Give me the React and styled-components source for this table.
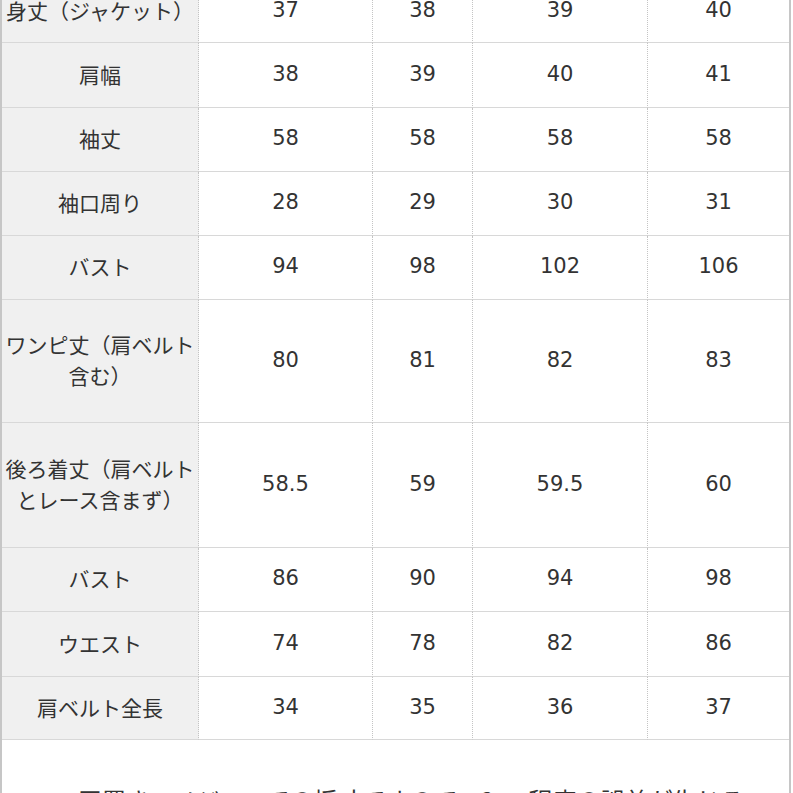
import React from 'react';
import styled, { createGlobalStyle } from 'styled-components';

const GlobalStyle = createGlobalStyle`
  html, body {
    margin: 0;
    padding: 0;
    background: #ffffff;
  }
  body {
    width: 793px;
    height: 793px;
    overflow: hidden;
  }
`;

const Frame = styled.div`
  width: 791px;
  box-sizing: border-box;
  border-left: 2px solid #c6c6c6;
  border-right: 2px solid #c6c6c6;
  min-height: 900px;
  margin-top: -20px;
  font-family: "DejaVu Sans", "Noto Sans CJK JP", sans-serif;
  color: #333333;
`;

const Table = styled.div`
  display: grid;
  grid-template-columns: 197px 174px 100px 175px 1fr;
`;

const Cell = styled.div`
  height: ${p => p.$h}px;
  box-sizing: border-box;
  display: flex;
  align-items: center;
  justify-content: center;
  text-align: center;
  border-bottom: 1px solid #d8d8d8;
  border-right: ${p => (p.$last ? 'none' : '1px dotted #c4c4c4')};
  background: ${p => (p.$label ? '#f0f0f0' : '#ffffff')};
  font-size: 21px;
  font-family: ${p => (p.$label ? '"Noto Sans CJK JP", sans-serif' : '"DejaVu Sans", "Noto Sans CJK JP", sans-serif')};
  line-height: 31px;
  padding: 0 3px 2px;
  white-space: nowrap;
`;

const Note = styled.p`
  margin: 0;
  padding: 43px 0 0 76px;
  font-family: "Noto Sans CJK JP", sans-serif;
  font-size: 24px;
  line-height: 34px;
  color: #333333;
  white-space: nowrap;
`;

const rows = [
  { label: ['身丈（ジャケット）'], values: ['37', '38', '39', '40'], h: 63 },
  { label: ['肩幅'], values: ['38', '39', '40', '41'], h: 65 },
  { label: ['袖丈'], values: ['58', '58', '58', '58'], h: 64 },
  { label: ['袖口周り'], values: ['28', '29', '30', '31'], h: 64 },
  { label: ['バスト'], values: ['94', '98', '102', '106'], h: 64 },
  { label: ['ワンピ丈（肩ベルト', '含む）'], values: ['80', '81', '82', '83'], h: 123 },
  { label: ['後ろ着丈（肩ベルト', 'とレース含まず）'], values: ['58.5', '59', '59.5', '60'], h: 125 },
  { label: ['バスト'], values: ['86', '90', '94', '98'], h: 64 },
  { label: ['ウエスト'], values: ['74', '78', '82', '86'], h: 65 },
  { label: ['肩ベルト全長'], values: ['34', '35', '36', '37'], h: 63 },
];

const App = () => (
  <>
    <GlobalStyle />
    <Frame>
      <Table>
        {rows.map((row, i) => (
          <React.Fragment key={i}>
            <Cell $label $h={row.h}>
              <span>
                {row.label.map((line, j) => (
                  <React.Fragment key={j}>
                    {j > 0 && <br />}
                    {line}
                  </React.Fragment>
                ))}
              </span>
            </Cell>
            {row.values.map((v, j) => (
              <Cell key={j} $h={row.h} $last={j === row.values.length - 1}>
                {v}
              </Cell>
            ))}
          </React.Fragment>
        ))}
      </Table>
      <Note>平置き、メジャーでの採寸ですので、2cm程度の誤差が生じる</Note>
    </Frame>
  </>
);

export default App;
